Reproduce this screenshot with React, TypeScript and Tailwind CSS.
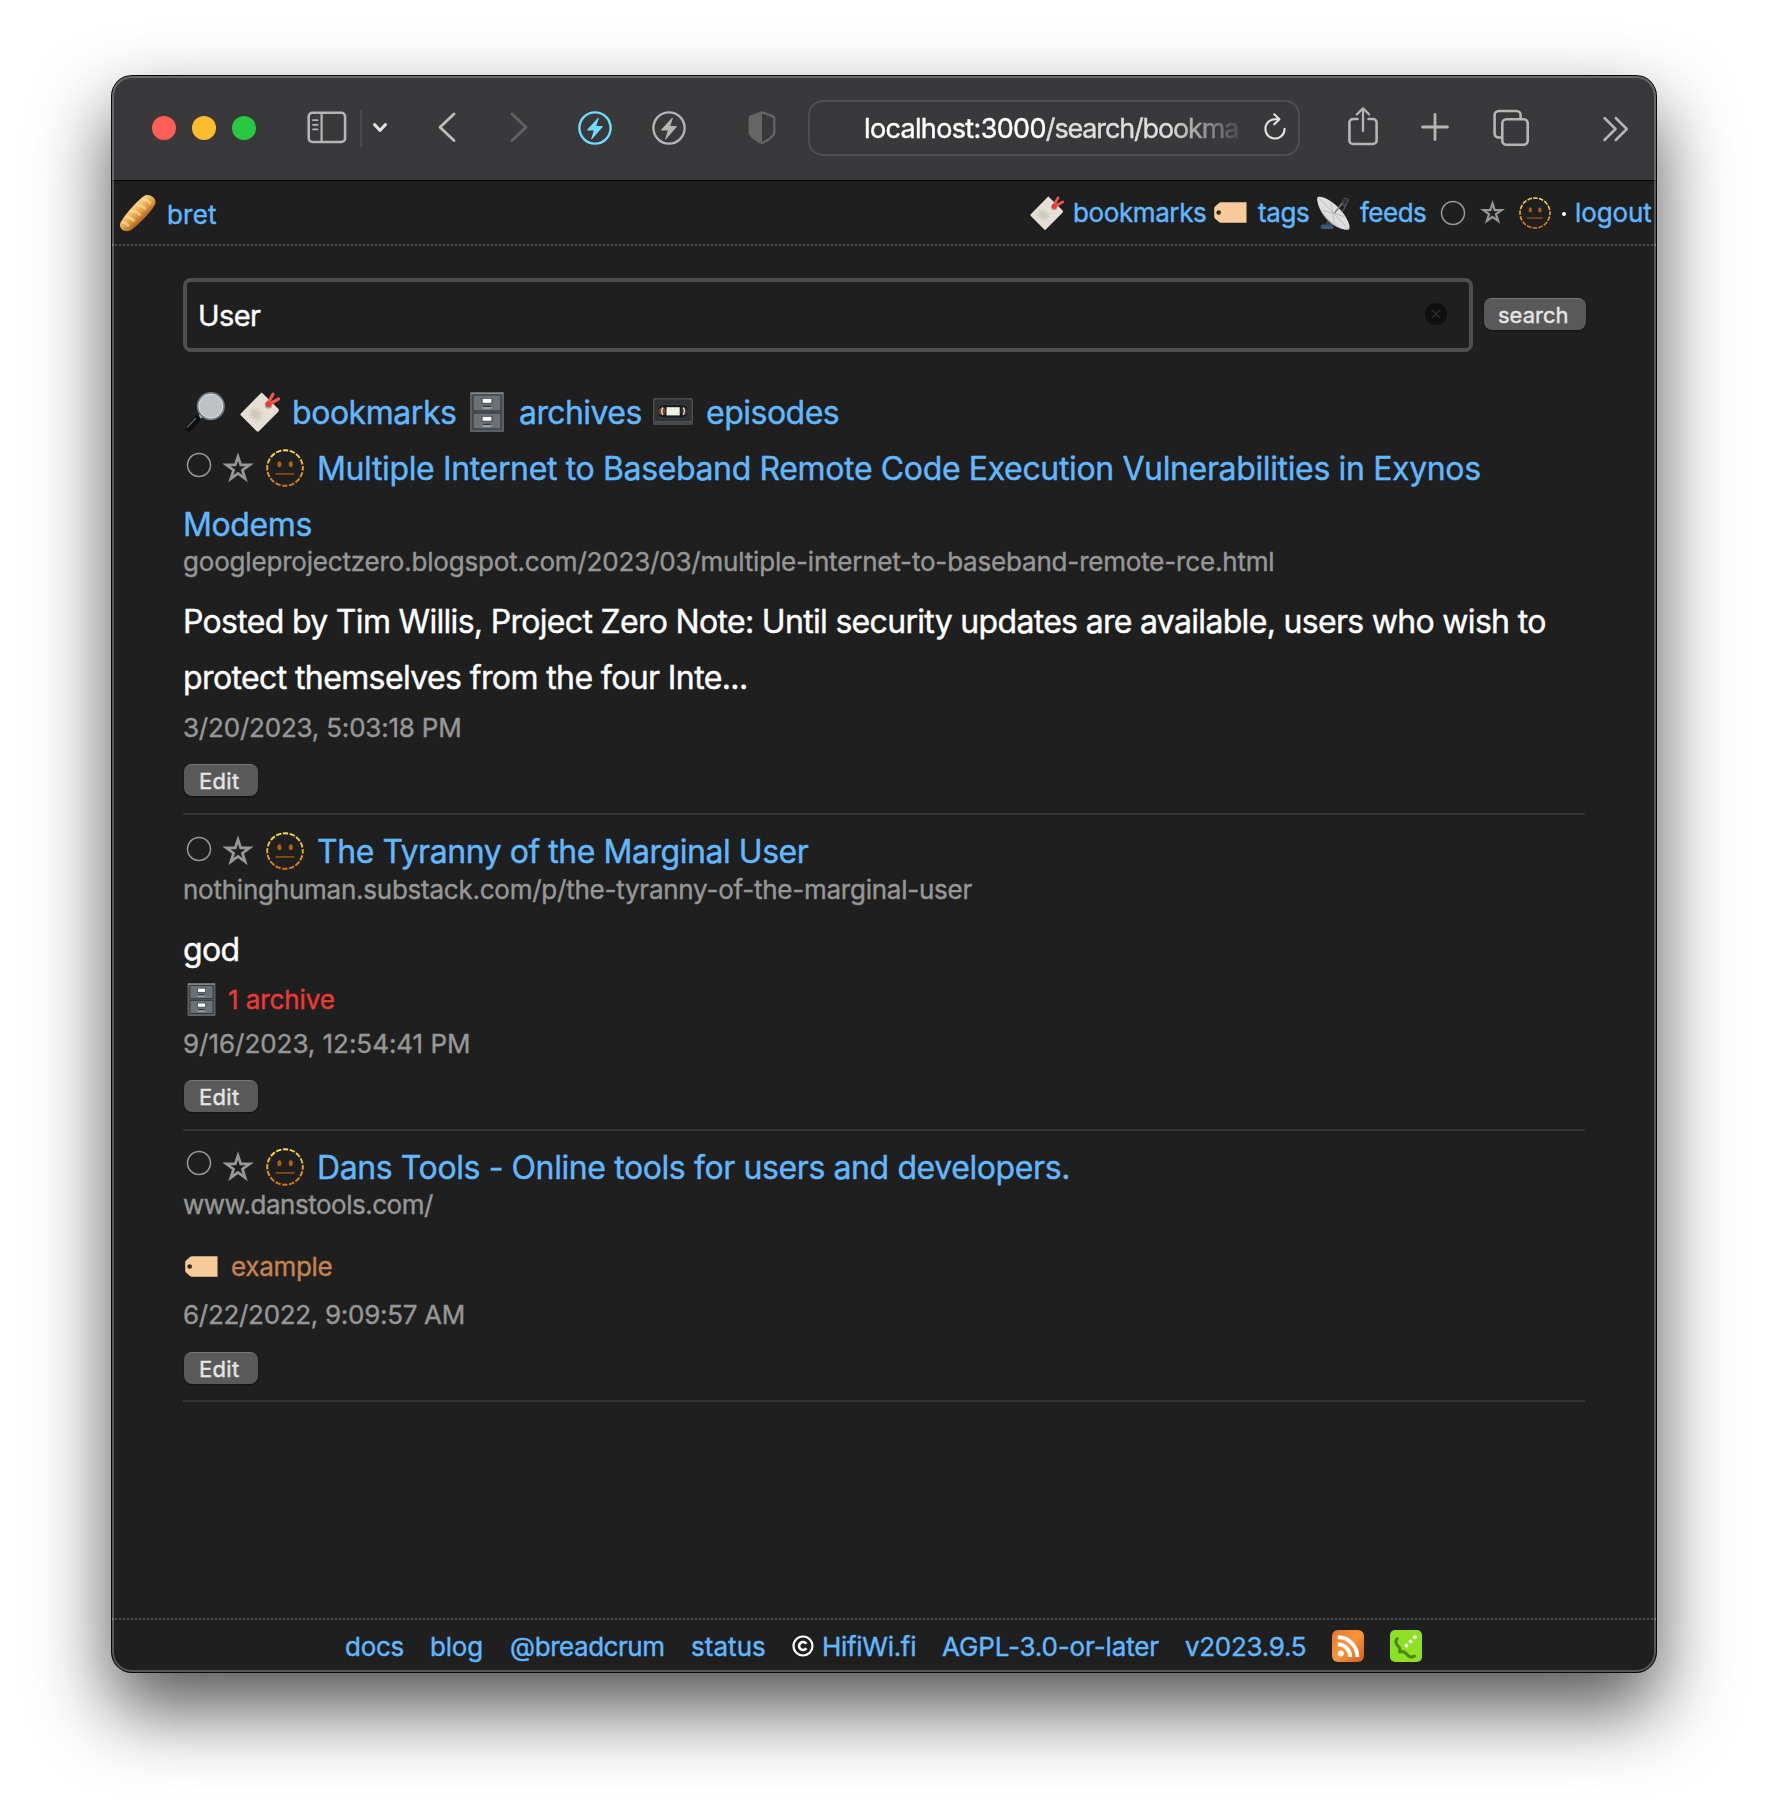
import type { ReactNode } from "react";

const link = "text-[#62b8ff] whitespace-nowrap shrink-0";

/* ---------- toolbar icons ---------- */

function SidebarIcon() {
  return (
    <svg className="w-[40px] h-[34px] shrink-0" viewBox="0 0 40 34" fill="none" stroke="#b5b5b6" strokeWidth="2.6">
      <rect x="1.7" y="1.8" width="36.4" height="29.2" rx="3.8" />
      <path d="M14.6 2v29" strokeWidth="2.2" />
      <path d="M6 9.2h4.6M6 13.8h4.6M6 18.4h4.6" strokeWidth="1.8" strokeLinecap="round" />
    </svg>
  );
}

function BoltCircle({ color }: { color: string }) {
  return (
    <svg className="w-[36px] h-[36px] shrink-0" viewBox="0 0 36 36" fill="none">
      <circle cx="18" cy="18" r="15.6" stroke={color} strokeWidth="2.4" />
      <path d="M20.9 8 10.300 19.500a.6.6 0 0 0 .4 1h6.100l-2.600 8.400c-.1.600.5.900.8.400l10.600-12.300c.3-.4.1-.9-.4-.9h-6l2.600-7.600c.1-.6-.5-.9-.9-.5Z" fill={color} />
    </svg>
  );
}

function Shield() {
  return (
    <svg className="w-[28px] h-[34px] shrink-0" viewBox="0 0 28 34">
      <path d="M14 1.4 25 5.400c.8.3 1.300 1 1.300 1.800v14.500c0 3.400-4.800 6.600-12.300 10.500C6.500 28.300 1.700 25.100 1.700 21.700V7.200c0-.8.5-1.500 1.300-1.800Z" fill="none" stroke="#666667" strokeWidth="2.200" strokeLinejoin="round" />
      <path d="M14 1.400 3 5.400c-.8.300-1.300 1-1.300 1.800v14.500c0 3.400 4.800 6.600 12.300 10.500Z" fill="#666667" />
    </svg>
  );
}

function Reload() {
  return (
    <svg className="w-[24px] h-[28px] shrink-0" viewBox="0 0 24 28" fill="none" stroke="#e3e3e3" strokeWidth="2.1" strokeLinecap="round" strokeLinejoin="round">
      <path d="M16 7.300H12A9.600 9.600 0 1 0 21.600 16.900" />
      <path d="M11.200 2.300 16.400 7.300l-5.200 5" />
    </svg>
  );
}

function Share() {
  return (
    <svg className="w-[32px] h-[40px] shrink-0" viewBox="0 0 32 40" fill="none" stroke="#b5b5b6" strokeWidth="2.600" strokeLinecap="round" strokeLinejoin="round">
      <path d="M10.500 13H6a3.600 3.600 0 0 0-3.600 3.600v17.800A3.600 3.600 0 0 0 6 38h20a3.600 3.600 0 0 0 3.600-3.600V16.600A3.600 3.600 0 0 0 26 13h-4.500" />
      <path d="M16 25V2.500M9.800 8.500 16 2.200l6.200 6.300" strokeWidth="2.300" />
    </svg>
  );
}

function Copies() {
  return (
    <svg className="w-[38px] h-[38px] shrink-0" viewBox="0 0 38 38" fill="none" stroke="#b5b5b6" strokeWidth="2.600">
      <path d="M9.500 28.500H6.600a4 4 0 0 1-4-4V6a4 4 0 0 1 4-4h18a4 4 0 0 1 4 4v3" />
      <rect x="10.300" y="10.200" width="25.400" height="25.600" rx="4" />
    </svg>
  );
}

/* ---------- emoji drawings ---------- */

function Bread() {
  return (
    <svg className="w-[38px] h-[38px] shrink-0" viewBox="0 0 38 38">
      <defs>
        <linearGradient id="loaf" x1="0.300" y1="0.250" x2="0.720" y2="0.720">
          <stop offset="0.200" stopColor="#f8cd7a" />
          <stop offset="0.550" stopColor="#e3a046" />
          <stop offset="0.950" stopColor="#a3561a" />
        </linearGradient>
      </defs>
      <path d="M1 30C2 25 20 4 26.500 1.300c4-1.500 10.500 2 10 7.700C36 14 16.500 34.500 10.500 36.800 5.500 38.500.200 35 1 30Z" fill="url(#loaf)" />
      <path d="M24 5.500c2.500.300 5.500 1.500 7 3.500M18.500 11c3 .300 6 1.700 7.500 3.500M13 17c3 .300 6 1.700 7.500 3.500M7.700 23c2.500.300 5.500 1.700 7 3.500M4 28.500c2.200.500 4 1.500 5 3" fill="none" stroke="#fde3a8" strokeOpacity="0.650" strokeWidth="2.500" strokeLinecap="round" />
    </svg>
  );
}

function Bookmark({ className }: { className: string }) {
  return (
    <svg className={className} viewBox="0 0 40 40">
      <path d="M22 .8 39 17.600 38.500 19.500 18.600 39.400Q17.500 40 16.500 39L.700 23.300Q0 22.300.900 21.400L20.800 1.200Q21.400.500 22 .8Z" fill="#e6dfd4" />
      <path d="m17 15 .5 5 2.500-4.500-1 5 4.500-2.500-3.500 3.600 5-.3-5 1.800 4.800 1.800-5-.3 3 4-4.500-2.600.8 5-2.300-4.500L16 31l-1-5.500-3 4.200 1-5.200-4.800 2.600 3.500-3.900-5.200.2 5.200-1.900L7 19.500l5 .4-2.800-4 4.300 2.700-.8-5 2.300 4.600Z" fill="#d2cabd" />
      <circle cx="28.500" cy="13" r="3.800" fill="#b8a79c" />
      <path d="m27.500 12 5.500-9.800M28.500 12.500l10-5.500" fill="none" stroke="#f0574e" strokeWidth="3.200" strokeLinecap="round" />
      <circle cx="28.500" cy="12.200" r="3" fill="#e23f38" />
    </svg>
  );
}

function Tag({ className }: { className: string }) {
  return (
    <svg className={className} viewBox="0 0 33 21">
      <path d="M7 .3h25.500v20.400H7a3 3 0 0 1-2-.8L1 16.500a3 3 0 0 1-.800-2V6.500a3 3 0 0 1 .8-2L5 1.100A3 3 0 0 1 7 .3Z" fill="#f7cc9a" />
      <circle cx="4.700" cy="10.600" r="2.400" fill="#49382c" />
      <circle cx="4.500" cy="10.300" r="1.100" fill="#15110e" />
    </svg>
  );
}

function Dish() {
  return (
    <svg className="ml-[8px] w-[33px] h-[34px] shrink-0" viewBox="0 0 33 34">
      <path d="m12 20-4 9 3 3.500h6l-2-9Z" fill="#3b4046" />
      <path d="M4 29.500q2-2.500 5 0l3-1 4 2-.500 2.500H5q-2-1-1-3.500Z" fill="#3c5a76" />
      <path d="m17 17 10-12M29.500 8 23 20" stroke="#50565b" strokeWidth="1.400" />
      <path d="m25.500 5 3-3.200 3.200 1.800-2.200 5-3 1.200Z" fill="#2b3136" stroke="#50575d" strokeWidth="1" />
      <path d="M.800 1C-1 6 3 17 11 24.500 18 31.500 27 35 32 33.300Z" fill="#bcbcbc" />
      <path d="M.800 1C6-.500 17 6 24 14.500 30.500 22 34 30.500 32 33.300 27 35 17 29 10 21.500 3 14-1 4.500.800 1Z" fill="#dedede" />
      <path d="m2 2 29.500 31M14 7.500l3.500 20M5 14l22 6.500" stroke="#b5b5b5" strokeWidth=".800" fill="none" />
      <path d="m17.500 17 7.500-9.500" stroke="#777c80" strokeWidth="1.300" />
    </svg>
  );
}

function Magnifier() {
  return (
    <svg className="w-[40px] h-[40px] shrink-0" viewBox="0 0 40 40">
      <path d="m13 27 4-4" stroke="#b9bec2" strokeWidth="3.500" />
      <path d="m3.800 36.200 8.500-9.200" stroke="#0c0e10" strokeWidth="6.500" strokeLinecap="round" />
      <path d="m2.500 35 8-8.500" stroke="#5a6066" strokeWidth="1.500" strokeLinecap="round" />
      <circle cx="25.800" cy="14.200" r="13" fill="#bfc1c4" stroke="#717a83" strokeWidth="2.200" />
      <circle cx="25.800" cy="14.200" r="12" fill="none" stroke="#dfe5ea" strokeWidth="1" />
    </svg>
  );
}

function Cabinet({ className }: { className: string }) {
  return (
    <svg className={className} viewBox="0 0 34 40">
      <rect width="34" height="40" rx="1" fill="#5a6064" />
      <rect x=".700" y=".700" width="32.600" height="1.600" fill="#868d91" />
      {[3, 21].map((y) => (
        <g key={y}>
          <rect x="3" y={y} width="28" height="16" fill="#6b7276" stroke="#353a3d" strokeWidth="1.200" />
          <rect x="11.500" y={y + 3} width="11" height="5.600" fill="#41474a" />
          <rect x="12.600" y={y + 3.800} width="8.800" height="4" fill="#fff" />
          <path d={`M12 ${y + 10.500}h10v1.500q0 2-2 2h-6q-2 0-2-2Z`} fill="#999fa2" />
          <path d={`M12.500 ${y + 10.500}h9v1.500h-9Z`} fill="#34393c" />
        </g>
      ))}
    </svg>
  );
}

function Tape() {
  return (
    <svg className="w-[40px] h-[27px] shrink-0" viewBox="0 0 40 27">
      <rect width="40" height="27" rx="1.500" fill="#43494c" />
      <rect x="1" y="1" width="38" height="22.500" rx="1" fill="#2e3235" stroke="#50575a" strokeWidth=".800" />
      <rect x="4" y="6.500" width="32" height="13.500" rx="6.500" fill="#191b1c" stroke="#474d50" strokeWidth=".600" />
      <circle cx="9" cy="13.200" r="3.800" fill="#6b4228" />
      <circle cx="31.200" cy="13.200" r="3.800" fill="#3b2d25" />
      <path d="M10 9.500q-2.500 3.700 0 7.400M30.200 9.500q2.500 3.700 0 7.400" fill="none" stroke="#d9d9d9" strokeWidth="1.500" />
      <rect x="13.500" y="9.200" width="13.200" height="8.200" fill="#f1efe2" />
    </svg>
  );
}

function Face({ className }: { className: string }) {
  return (
    <svg className={className} viewBox="0 0 38 38">
      <defs>
        <linearGradient id="ring" x1="0" y1="0" x2="0" y2="38" gradientUnits="userSpaceOnUse">
          <stop offset="0" stopColor="#ffe14a" />
          <stop offset="0.500" stopColor="#eba92e" />
          <stop offset="1" stopColor="#d3700f" />
        </linearGradient>
      </defs>
      <circle cx="19" cy="19" r="17.800" fill="none" stroke="url(#ring)" strokeWidth="1.900" strokeDasharray="5.400 1.590" strokeDashoffset="2.700" />
      <ellipse cx="13.400" cy="15.300" rx="2" ry="3" fill="#ad620f" />
      <ellipse cx="24.800" cy="15.300" rx="2" ry="3" fill="#ad620f" />
      <path d="M10.300 24.900h17.400" stroke="#8a4c0b" strokeWidth="1.900" strokeLinecap="round" />
    </svg>
  );
}

function Star({ className }: { className: string }) {
  return (
    <svg className={className} viewBox="0 0 28 28">
      <path
        d="M14 4.600 16.250 11.510H23.510L17.630 15.780 19.880 22.690 14 18.420 8.120 22.690 10.370 15.780 4.490 11.510H11.750Z"
        fill="none"
        stroke="#989898"
        strokeWidth="2.250"
        strokeMiterlimit="10"
      />
    </svg>
  );
}

function Ring({ className }: { className: string }) {
  return (
    <svg className={className} viewBox="0 0 26 26">
      <circle cx="13" cy="13" r="11.500" fill="none" stroke="#989898" strokeWidth="1.500" />
    </svg>
  );
}

/* ---------- page pieces ---------- */

function MacButton({ children, className }: { children: ReactNode; className: string }) {
  return (
    <button className={`h-[32px] rounded-[8px] bg-[#595959] text-[22px] leading-[30px] text-[#e6e6e6] whitespace-nowrap shrink-0 text-left border-t border-t-[#767676] shadow-[0_1px_2px_rgba(0,0,0,0.5)] ${className}`}>
      <span className="block h-[30px]">{children}</span>
    </button>
  );
}

function TitleRow({ children, ringClass = "mb-[4px]" }: { children: ReactNode; ringClass?: string }) {
  return (
    <div className="flex h-[56px] items-center text-[32px] leading-[56px]">
      <Ring className={`w-[26px] h-[26px] ml-[3px] shrink-0 ${ringClass}`} />
      <Star className="w-[34px] h-[34px] ml-[9px] shrink-0" />
      <Face className="w-[38px] h-[38px] ml-[11px] shrink-0" />
      <a className={`${link} ml-[13px] pt-[2px]`}>{children}</a>
    </div>
  );
}

function Url({ children, className }: { children: ReactNode; className: string }) {
  return <div className={`h-[18px] text-[26px] leading-[20px] text-[#979797] whitespace-nowrap ${className}`}>{children}</div>;
}

function Stamp({ children, className }: { children: ReactNode; className: string }) {
  return <div className={`h-[44px] text-[26px] leading-[46px] text-[#979797] whitespace-nowrap ${className}`}>{children}</div>;
}

export default function App() {
  return (
    <div className="w-[1768px] h-[1820px] bg-white pt-[76px] pl-[112px] overflow-hidden font-['Inter','Liberation_Sans',sans-serif] [-webkit-text-stroke:0.4px]">
      <div className="relative flex h-[1596px] w-[1544px] flex-col overflow-hidden rounded-[20px] bg-[#1f1f1f] shadow-[0_0_0_1px_#0a0a0a,0_36px_76px_2px_rgba(0,0,0,0.66)]">
        {/* browser toolbar */}
        <div className="flex h-[105px] shrink-0 items-center border-b border-black bg-[#39393b]">
          <div className="flex gap-[16px] ml-[40px]">
            <span className="size-[24px] rounded-full bg-[#ff5f57]" />
            <span className="size-[24px] rounded-full bg-[#febc2e]" />
            <span className="size-[24px] rounded-full bg-[#28c840]" />
          </div>
          <div className="flex items-center ml-[51px]">
            <span className="-mt-px">
              <SidebarIcon />
            </span>
            <span className="ml-[13px] h-[37px] w-[2px] bg-[#4c4c4e]" />
            <svg className="ml-[9px] w-[18px] h-[14px]" viewBox="0 0 18 14" fill="none" stroke="#e4e4e4" strokeWidth="3" strokeLinecap="round" strokeLinejoin="round">
              <path d="m3.500 3.500 5.500 6 5.500-6" />
            </svg>
          </div>
          <svg className="ml-[47px] w-[22px] h-[34px] -mt-[3px]" viewBox="0 0 22 34" fill="none" stroke="#bdbdbe" strokeWidth="2.800" strokeLinecap="round" strokeLinejoin="round">
            <path d="M18 4 4 17.200l14 13.300" />
          </svg>
          <svg className="ml-[50px] w-[22px] h-[34px] -mt-[3px]" viewBox="0 0 22 34" fill="none" stroke="#626263" strokeWidth="2.800" strokeLinecap="round" strokeLinejoin="round">
            <path d="m4 4 14 13.200L4 30.500" />
          </svg>
          <div className="flex gap-[38px] ml-[47px]">
            <BoltCircle color="#6fdcff" />
            <BoltCircle color="#b5b5b6" />
          </div>
          <div className="ml-[61px] -mt-px">
            <Shield />
          </div>
          <div className="ml-[32px] flex h-[56px] w-[492px] items-center rounded-[15px] border-2 border-[#4f4f51]">
            <span className="ml-[54px] mt-[2px] w-[377px] text-[27px] leading-[36px] text-[#dedede] whitespace-nowrap tracking-[-1.15px] [mask-image:linear-gradient(to_right,black_81%,rgba(0,0,0,0.15)_99%)]">
              <span className="text-white tracking-[-0.65px]">localhost:3000</span>/search/bookma
            </span>
            <span className="ml-[22px] -mt-[4px]">
              <Reload />
            </span>
          </div>
          <div className="flex items-center ml-[47px]">
            <span className="-mt-[5px]">
              <Share />
            </span>
            <svg className="ml-[40px] w-[32px] h-[32px] -mt-[3px]" viewBox="0 0 32 32" stroke="#b5b5b6" strokeWidth="2.800" strokeLinecap="round">
              <path d="M16 3.500v25M3.500 16h25" />
            </svg>
            <span className="ml-[41px] -mt-px">
              <Copies />
            </span>
            <svg className="ml-[71px] w-[30px] h-[28px] mt-px" viewBox="0 0 30 28" fill="none" stroke="#b5b5b6" strokeWidth="2.500" strokeLinecap="round" strokeLinejoin="round">
              <path d="m3.500 3 11 11-11 11M14.800 3l11 11-11 11" />
            </svg>
          </div>
        </div>

        {/* site header */}
        <header className="flex h-[65px] shrink-0 items-center justify-between border-b-2 border-dotted border-[#525252] text-[26px] leading-[63px]">
          <div className="flex items-center pl-[7px]">
            <Bread />
            <a className={`${link} ml-[10px] pt-[3px] tracking-[0.2px]`}>bret</a>
          </div>
          <div className="flex h-[63px] items-center">
            <Bookmark className="w-[34px] h-[34px] shrink-0" />
            <a className={`${link} ml-[9px] w-[133px] tracking-[-0.4px]`}>bookmarks</a>
            <Tag className="ml-[8px] w-[33px] h-[21px] shrink-0" />
            <a className={`${link} ml-[11px] w-[51px] tracking-[-0.4px]`}>tags</a>
            <Dish />
            <a className={`${link} ml-[10px] w-[66px] tracking-[-0.5px]`}>feeds</a>
            <Ring className="ml-[14px] w-[26px] h-[26px] shrink-0" />
            <Star className="ml-[13px] w-[27px] h-[27px] shrink-0" />
            <Face className="ml-[13px] w-[32px] h-[32px] shrink-0" />
            <span className="ml-[11px] mt-[2px] size-[4px] rounded-full bg-white" />
            <a className={`${link} ml-[9px] w-[81px] tracking-[-0.1px]`}>logout</a>
          </div>
        </header>

        {/* search and results */}
        <main className="flex grow flex-col pl-[71px] pr-[71px] pt-[32px]">
          <form className="flex items-center">
            <div className="flex h-[74px] w-[1290px] shrink-0 items-center justify-between rounded-[8px] border-4 border-[#4e4e4e] pl-[11px] pr-[20px]">
              <span className="text-[29px] leading-[66px] pt-px tracking-[-0.6px] text-white">User</span>
              <svg className="w-[26px] h-[26px] -mt-[2px]" viewBox="0 0 26 26">
                <circle cx="13" cy="13" r="11" fill="#0f0f0f" />
                <path d="m9 9 8 8M17 9l-8 8" stroke="#2c2c2c" strokeWidth="1.600" />
              </svg>
            </div>
            <MacButton className="-mt-[2px] ml-[11px] w-[102px] pl-[14px]">search</MacButton>
          </form>

          <nav className="mt-[33px] flex h-[55px] items-center text-[32px] leading-[55px]">
            <span className="ml-[2px] -mt-px">
              <Magnifier />
            </span>
            <Bookmark className="ml-[15px] w-[40px] h-[40px] -mt-px shrink-0" />
            <a className={`${link} ml-[12px] w-[166px] tracking-[-0.45px]`}>bookmarks</a>
            <Cabinet className="ml-[12px] w-[34px] h-[40px] -mt-px shrink-0" />
            <a className={`${link} ml-[15px] w-[124px] tracking-[-0.58px]`}>archives</a>
            <span className="ml-[10px] -mt-[2px]">
              <Tape />
            </span>
            <a className={`${link} ml-[13px] tracking-[-0.5px]`}>episodes</a>
          </nav>

          <article className="flex flex-col border-b-2 border-[#333333] pb-[17px]">
            <TitleRow ringClass="mb-[6px]">
              <span className="tracking-[-0.36px]">Multiple Internet to Baseband Remote Code Execution Vulnerabilities in Exynos</span>
            </TitleRow>
            <a className={`${link} h-[56px] text-[32px] leading-[58px] tracking-[-0.4px]`}>Modems</a>
            <Url className="tracking-[-0.185px]">
              googleprojectzero.blogspot.com/2023/03/multiple-internet-to-baseband-remote-rce.html
            </Url>
            <p className="mt-[23px] text-[32px] leading-[58px] text-white whitespace-nowrap">
              <span className="block h-[56px] tracking-[-0.685px]">
                Posted by Tim Willis, Project Zero Note: Until security updates are available, users who wish to
              </span>
              <span className="block h-[56px] tracking-[-0.61px]">protect themselves from the four Inte...</span>
            </p>
            <Stamp className="tracking-[-0.2px]">3/20/2023, 5:03:18 PM</Stamp>
            <MacButton className="mt-[15px] ml-px w-[74px] pl-[15px] tracking-[0.3px]">Edit</MacButton>
          </article>

          <article className="mt-[8px] flex flex-col border-b-2 border-[#333333] pb-[17px]">
            <TitleRow>
              <span className="tracking-[-0.46px]">The Tyranny of the Marginal User</span>
            </TitleRow>
            <Url className="mt-px tracking-[-0.24px]">nothinghuman.substack.com/p/the-tyranny-of-the-marginal-user</Url>
            <p className="mt-[23px] h-[56px] text-[32px] leading-[58px] tracking-[-0.7px] text-white">god</p>
            <div className="flex h-[44px] items-center text-[26px] leading-[44px]">
              <Cabinet className="ml-[4px] w-[29px] h-[33px] shrink-0" />
              <a className="ml-[12px] pt-[2px] tracking-[-0.1px] text-[#ec3a37]">1 archive</a>
            </div>
            <Stamp className="tracking-[-0.036px]">9/16/2023, 12:54:41 PM</Stamp>
            <MacButton className="mt-[15px] ml-px w-[74px] pl-[15px] tracking-[0.3px]">Edit</MacButton>
          </article>

          <article className="mt-[8px] flex flex-col border-b-2 border-[#333333] pb-[16px]">
            <TitleRow ringClass="mb-[8px]">
              <span className="tracking-[-0.4px]">Dans Tools - Online tools for users and developers.</span>
            </TitleRow>
            <Url className="tracking-[-0.48px]">www.danstools.com/</Url>
            <div className="mt-[27px] flex h-[52px] items-center text-[26px] leading-[52px]">
              <Tag className="ml-[2px] w-[33px] h-[21px] shrink-0" />
              <a className="ml-[13px] pt-[2px] tracking-[-0.3px] text-[#c68350]">example</a>
            </div>
            <Stamp className="tracking-[-0.3px]">6/22/2022, 9:09:57 AM</Stamp>
            <MacButton className="mt-[16px] ml-px w-[74px] pl-[15px] tracking-[0.3px]">Edit</MacButton>
          </article>
        </main>

        {/* site footer */}
        <footer className="flex h-[54px] shrink-0 items-center border-t-2 border-dotted border-[#525252] pl-[233px] text-[26px] leading-[54px]">
          <a className={`${link} w-[85px] pt-px tracking-[-0.25px]`}>docs</a>
          <a className={`${link} w-[80px] pt-px tracking-[-0.2px]`}>blog</a>
          <a className={`${link} w-[181px] pt-px tracking-[-0.45px]`}>@breadcrum</a>
          <a className={`${link} w-[101px] pt-px tracking-[0.05px]`}>status</a>
          <svg className="w-[22px] h-[22px] shrink-0" viewBox="0 0 22 22" fill="none" stroke="#fff">
            <circle cx="11" cy="11" r="9.500" strokeWidth="2.200" />
            <path d="M14.400 8.800a4 4 0 1 0 0 4.400" strokeWidth="2.600" />
          </svg>
          <a className={`${link} ml-[8px] w-[120px] pt-px tracking-[-0.3px]`}>HifiWi.fi</a>
          <a className={`${link} w-[243px] pt-px tracking-[-0.13px]`}>AGPL-3.0-or-later</a>
          <a className={`${link} w-[147px] pt-px tracking-[-0.3px]`}>v2023.9.5</a>
          <svg className="w-[32px] h-[32px] shrink-0" viewBox="0 0 32 32">
            <defs>
              <linearGradient id="rss" x1="0" y1="0" x2="1" y2="1">
                <stop offset="0" stopColor="#e8772e" />
                <stop offset="0.500" stopColor="#f8963a" />
                <stop offset="1" stopColor="#d55a22" />
              </linearGradient>
            </defs>
            <rect width="32" height="32" rx="6" fill="url(#rss)" />
            <circle cx="8.800" cy="23.600" r="3" fill="#fff" />
            <path d="M5.800 14.300a12.700 12.700 0 0 1 12.500 12.600M5.800 7.300a19.400 19.400 0 0 1 19.500 19.600" fill="none" stroke="#fff" strokeWidth="3.900" />
          </svg>
          <svg className="ml-[26px] w-[32px] h-[32px] shrink-0" viewBox="0 0 32 32">
            <rect width="32" height="32" rx="5" fill="#8ee024" />
            <path d="M7.300 8.500C5.500 10.500 5.500 13 7.500 15.500c2 2 3.500 3.500 2 6.500 3-1.200 4.500-.5 6.500 1.500 2.500 3 5.500 4.500 8.500 2.500" fill="none" stroke="#4d8710" strokeWidth="3" strokeLinecap="round" strokeLinejoin="round" />
            <g fill="#fff">
              <circle cx="24.800" cy="7.200" r="1.900" />
              <circle cx="20.600" cy="11.400" r="1.900" />
              <circle cx="16.400" cy="15.600" r="1.900" />
            </g>
          </svg>
        </footer>

        {/* window edge highlight */}
        <div className="pointer-events-none absolute inset-0 rounded-[20px] border-2 border-white/25" />
      </div>
    </div>
  );
}
